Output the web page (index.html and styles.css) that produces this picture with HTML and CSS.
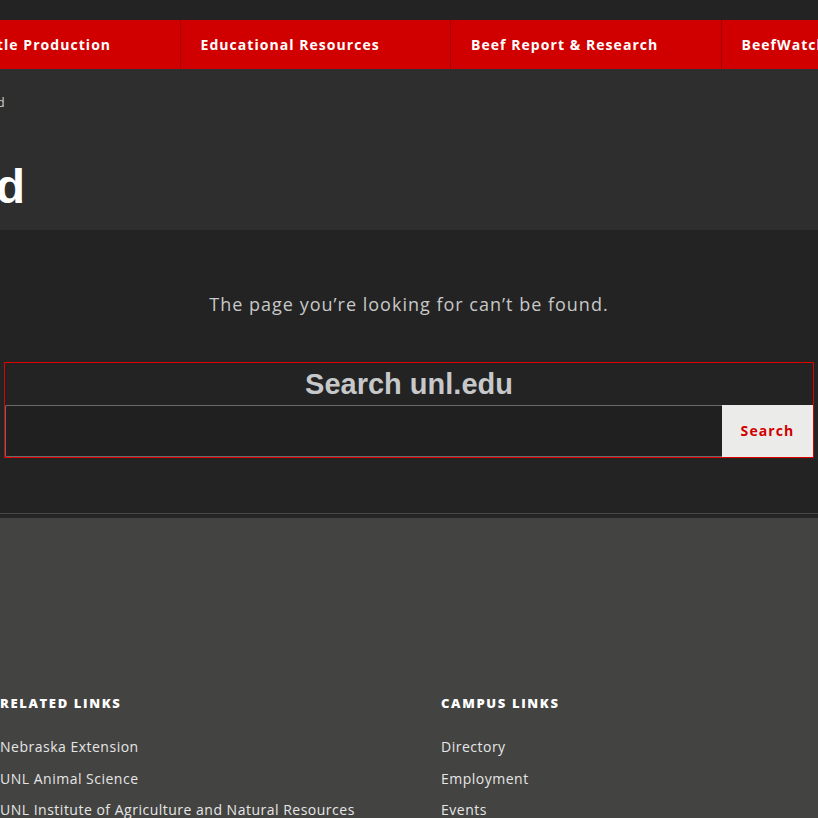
FILE: index.html
```html
<!DOCTYPE html>
<html lang="en">
<head>
<meta charset="utf-8">
<title>Page Not Found</title>
<link rel="stylesheet" href="styles.css">
</head>
<body>
<div class="topbar"></div>
<nav class="nav">
  <ul class="nav-list">
    <li class="nav-item">Beef Cattle Production</li>
    <li class="nav-item">Educational Resources</li>
    <li class="nav-item">Beef Report &amp; Research</li>
    <li class="nav-item">BeefWatch</li>
  </ul>
</nav>
<header class="hero">
  <div class="crumbs"><span>Home</span><span class="sep">/</span><span>Page Not Found</span></div>
  <h1 class="title">Page Not Found</h1>
</header>
<main class="main">
  <p class="lead">The page you’re looking for can’t be found.</p>
  <form class="search">
    <h2 class="search-title">Search unl.edu</h2>
    <div class="search-row">
      <input class="search-input" type="text" aria-label="Search">
      <button class="search-btn" type="button">Search</button>
    </div>
  </form>
</main>
<div class="divider"></div>
<footer class="footer">
  <div class="footer-cols">
    <div class="col">
      <h3 class="col-title">Related Links</h3>
      <ul class="links">
        <li>Nebraska Extension</li>
        <li>UNL Animal Science</li>
        <li>UNL Institute of Agriculture and Natural Resources</li>
      </ul>
    </div>
    <div class="col">
      <h3 class="col-title">Campus Links</h3>
      <ul class="links">
        <li>Directory</li>
        <li>Employment</li>
        <li>Events</li>
      </ul>
    </div>
  </div>
</footer>
</body>
</html>
```
FILE: styles.css
```css
html, body {
  margin: 0;
  padding: 0;
}
body {
  background: #232323;
  font-family: "Open Sans", "Liberation Sans", sans-serif;
  overflow: hidden;
  width: 818px;
  height: 818px;
}
.topbar {
  height: 20px;
  background: #232323;
}
.nav {
  height: 49px;
  background: #d00000;
  overflow: hidden;
}
.nav-list {
  list-style: none;
  margin: 0 0 0 -90px;
  padding: 0;
  display: flex;
  height: 100%;
}
.nav-item {
  flex: 0 0 270.5px;
  box-sizing: border-box;
  padding: 0 20px;
  display: flex;
  align-items: center;
  color: #fff;
  font-weight: 700;
  font-size: 14px;
  letter-spacing: 1.05px;
  white-space: nowrap;
  border-right: 1px solid #a80000;
}
.hero {
  background: #2e2e2e;
  height: 161px;
  display: flex;
  flex-direction: column;
}
.crumbs {
  width: 5px;
  display: flex;
  justify-content: flex-end;
  white-space: nowrap;
  font-size: 12px;
  letter-spacing: 0.5px;
  color: #d4d4d4;
  margin-top: 26px;
  line-height: 16px;
  gap: 6px;
}
.title {
  width: 25px;
  display: flex;
  justify-content: flex-end;
  white-space: nowrap;
  margin: 52px 0 0 0;
  font-family: "Liberation Sans", Arial, sans-serif;
  font-weight: 700;
  font-size: 48px;
  line-height: 48px;
  color: #fff;
}
.main {
  background: #232323;
  height: 283px;
  display: flex;
  flex-direction: column;
  align-items: center;
}
.lead {
  margin: 62px 0 0 0;
  font-size: 18px;
  letter-spacing: 1px;
  line-height: 24px;
  color: #c8c8c8;
}
.search {
  margin-top: 46px;
  width: 810px;
  box-sizing: border-box;
  border: 1px solid #e00000;
  display: flex;
  flex-direction: column;
  align-items: center;
}
.search-title {
  margin: 0;
  font-family: "Liberation Sans", Arial, sans-serif;
  font-weight: 700;
  font-size: 29px;
  line-height: 42px;
  color: #c6c8ca;
}
.search-row {
  display: flex;
  width: 100%;
  height: 52px;
}
.search-input {
  flex: 1;
  margin: 0;
  box-sizing: border-box;
  background: #202020;
  border: 1px solid #6a6a6a;
  border-right: none;
  border-radius: 2px 0 0 2px;
  color: #fff;
}
.search-btn {
  flex: 0 0 91px;
  margin: 0;
  border: none;
  background: #ebebea;
  color: #d00000;
  font-family: "Open Sans", sans-serif;
  font-weight: 700;
  font-size: 14px;
  letter-spacing: 1.1px;
  padding-bottom: 2px;
}
.divider {
  height: 1px;
  background: #232323;
  border-top: 1px solid #474747;
  border-bottom: 3px solid #262626;
}
.footer {
  background: #434341;
  height: 400px;
}
.footer-cols {
  display: grid;
  grid-template-columns: 441px 1fr;
  padding-top: 175px;
}
.col-title {
  margin: 0;
  font-size: 13px;
  font-weight: 800;
  letter-spacing: 1.65px;
  text-transform: uppercase;
  color: #fff;
  line-height: 20px;
}
.links {
  list-style: none;
  margin: 24px 0 0 0;
  padding: 0;
  display: flex;
  flex-direction: column;
  gap: 11.5px;
}
.links li {
  font-size: 14px;
  letter-spacing: 0.5px;
  line-height: 20px;
  color: #e6e6e6;
  white-space: nowrap;
}
```
